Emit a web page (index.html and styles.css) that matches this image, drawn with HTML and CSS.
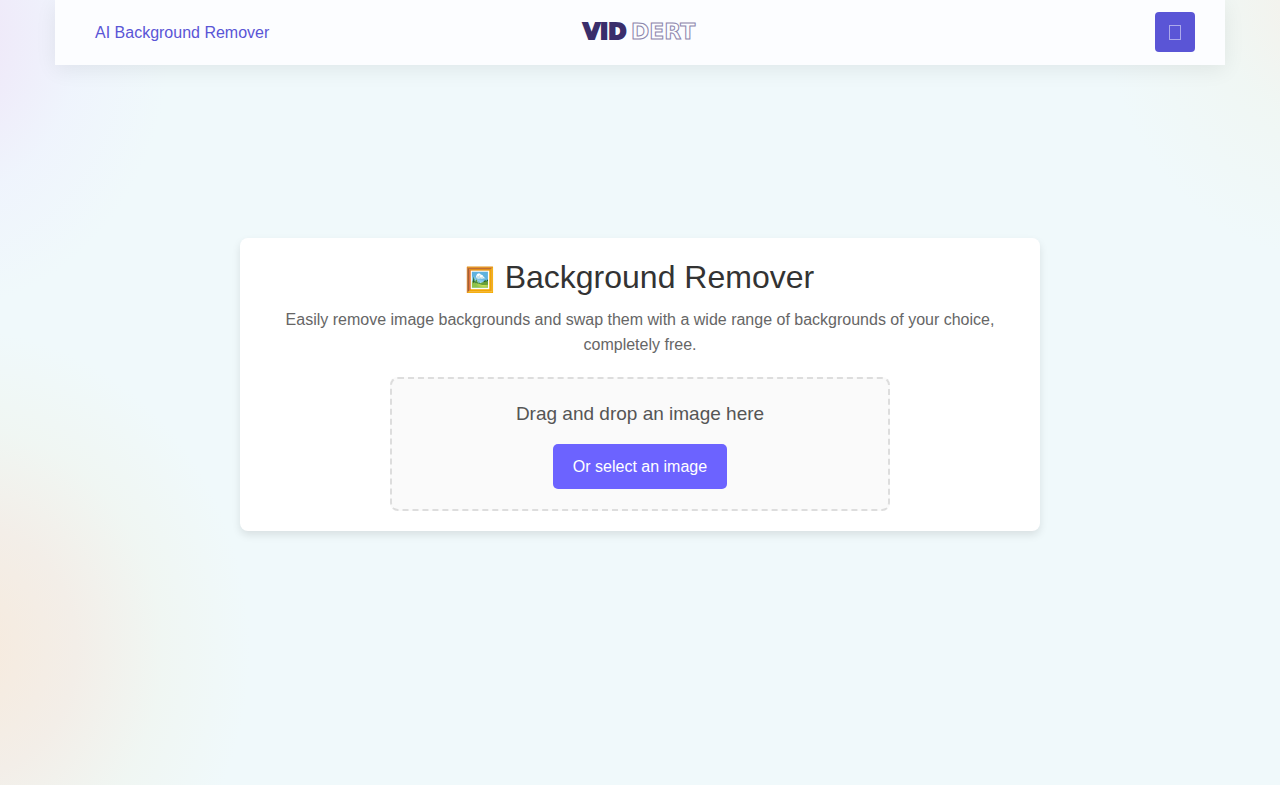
FILE: index.html
```html
<!DOCTYPE html>
<html lang="en">
<head>
    <meta charset="UTF-8">
    <meta name="viewport" content="width=device-width, initial-scale=1.0">
    <title>AI Background Remover</title>
    <link rel="stylesheet" href="styles.css">
</head>
<body>
    <div class="page">
        <!-- Header -->
        <header class="header">
            <nav class="nav">
                <a class="nav-link" href="#">AI Background Remover</a>
            </nav>
            <a class="logo" href="#">
                <svg width="120" height="36" viewBox="0 0 120 36">
                    <text class="logo-solid" x="3" y="25">VID</text>
                    <text class="logo-outline" x="51" y="25">DERT</text>
                </svg>
            </a>
            <div class="header-right">
                <button class="menu-button" type="button" aria-label="Menu">
                    <svg width="14" height="16" viewBox="0 0 14 16">
                        <rect x="1.5" y="1.5" width="11" height="14"></rect>
                    </svg>
                </button>
            </div>
        </header>

        <!-- Background remover -->
        <main class="main">
            <section class="card">
                <h1><span class="emoji">🖼️</span> Background Remover</h1>
                <p class="intro">Easily remove image backgrounds and swap them with a wide range of backgrounds of your choice, completely free.</p>
                <div class="drop-area">
                    <p class="drop-text">Drag and drop an image here</p>
                    <button class="select-button" type="button">Or select an image</button>
                </div>
            </section>
        </main>
    </div>
</body>
</html>
```
FILE: styles.css
```css
* {
    box-sizing: border-box;
}

body {
    margin: 0;
    background-color: #fff;
    font-family: "Liberation Sans", Arial, sans-serif;
    font-size: 16px;
    line-height: 25px;
}

h1, p {
    margin: 0;
}

.page {
    display: flex;
    flex-direction: column;
    min-height: calc(100vh - 15px);
    background-color: #f0f9fb;
    background-image:
        radial-gradient(ellipse 230px 270px at -60px 40px, #efe3f7, rgba(239, 243, 253, 0.8) 60%, rgba(240, 249, 251, 0)),
        radial-gradient(ellipse 290px 320px at -40px 650px, #f7eadc, #f3eee8 40%, rgba(240, 246, 242, 0.9) 70%, rgba(240, 249, 251, 0)),
        radial-gradient(ellipse 230px 270px at calc(100% + 50px) -10px, #f5f0e9, rgba(240, 246, 242, 0.8) 50%, rgba(240, 249, 251, 0));
}

/* Header */
.header {
    display: flex;
    align-items: center;
    width: 100%;
    max-width: 1170px;
    height: 65px;
    margin: 0 auto;
    padding: 0 30px;
    border-bottom: 1px solid #fcfdff;
    background-color: #fcfdff;
    box-shadow: 0 5px 20px rgba(0, 0, 0, 0.07);
}

.nav, .header-right {
    flex: 1;
}

.nav-link {
    padding: 0 10px;
    color: #5a55d6;
    text-decoration: none;
}

.logo {
    display: flex;
}

.logo-solid, .logo-outline {
    font-family: "DejaVu Sans", sans-serif;
    font-size: 22px;
    font-weight: 700;
}

.logo-solid {
    fill: #3a2e6b;
    stroke: #3a2e6b;
    stroke-width: 2px;
}

.logo-outline {
    fill: none;
    stroke: #8b84ab;
    stroke-width: 1px;
}

.header-right {
    display: flex;
    justify-content: flex-end;
}

.menu-button {
    display: flex;
    align-items: center;
    justify-content: center;
    width: 40px;
    height: 40px;
    padding: 0;
    border: none;
    border-radius: 4px;
    background-color: #5a55d6;
    cursor: pointer;
}

.menu-button rect {
    fill: none;
    stroke: #aca9eb;
}

/* Card */
.main {
    display: flex;
    flex: 1;
    align-items: center;
    justify-content: center;
    padding-bottom: 81px;
}

.card {
    width: 100%;
    max-width: 800px;
    padding: 20px;
    border-radius: 8px;
    background-color: #fff;
    box-shadow: 0 4px 8px rgba(0, 0, 0, 0.1);
    text-align: center;
}

.card h1 {
    margin-bottom: 10px;
    color: #333;
    font-size: 32px;
    font-weight: 400;
    line-height: 39px;
}

.emoji {
    font-family: "Noto Color Emoji", sans-serif;
    font-size: 24px;
    line-height: 1;
}

.intro {
    margin-bottom: 20px;
    color: #666;
}

.drop-area {
    max-width: 500px;
    margin: 0 auto;
    padding: 20px;
    border: 2px dashed #ddd;
    border-radius: 8px;
    background-color: #fafafa;
}

.drop-text {
    margin-bottom: 15px;
    color: #555;
    font-size: 19px;
    line-height: 30px;
}

.select-button {
    display: block;
    margin: 0 auto;
    padding: 10px 20px;
    border: none;
    border-radius: 5px;
    background-color: #6c63ff;
    color: #fff;
    font: inherit;
    cursor: pointer;
}

.select-button:hover {
    background-color: #5a55d6;
}
```
